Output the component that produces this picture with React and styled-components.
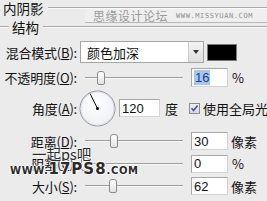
import React from "react";
import styled, { createGlobalStyle } from "styled-components";

const Global = createGlobalStyle`
  html, body { margin: 0; padding: 0; background: #ebebeb; overflow: hidden; }
  body { font-family: "Noto Sans CJK SC", "Noto Sans", sans-serif; }
`;

const Panel = styled.div`
  position: relative;
  width: 267px;
  height: 201px;
  background: #ebebeb;
  color: #111;
  font-size: 13px;
  overflow: hidden;
`;

const GroupHead = styled.div`
  display: flex;
  align-items: center;
  height: ${(p) => p.$h}px;
  padding-left: ${(p) => p.$indent}px;
  &::after {
    content: "";
    flex: 1;
    height: 0;
    border-top: 1px solid #a9a9a9;
    border-bottom: 1px solid #fafafa;
    margin-left: 4px;
  }
`;

const LeadLine = styled.span`
  width: 9px;
  border-top: 1px solid #a9a9a9;
  border-bottom: 1px solid #fafafa;
  margin-right: 3px;
`;

const HeadText = styled.span`
  font-size: 13.5px;
  line-height: 16px;
`;

const Rows = styled.div`
  display: flex;
  flex-direction: column;
  padding-top: ${(p) => p.$top}px;
`;

const Row = styled.div`
  display: flex;
  align-items: center;
  height: ${(p) => p.$h}px;
  margin-bottom: ${(p) => p.$mb || 0}px;
  white-space: nowrap;
  & > * { flex-shrink: 0; }
`;

const Label = styled.div`
  width: 77px;
  text-align: right;
  white-space: nowrap;
  font-size: 13px;
  letter-spacing: -0.2px;
  u { text-decoration: underline; text-underline-offset: 1px; }
`;

const Select = styled.div`
  margin-left: 3px;
  width: 124px;
  height: 22px;
  box-sizing: border-box;
  background: #fff;
  border: 1px solid #a5a5a5;
  display: flex;
  align-items: center;
  padding-left: 6px;
  font-size: 13px;
`;

const SelectText = styled.span`
  flex: 1;
`;

const Arrow = styled.div`
  width: 14px;
  height: 20px;
  background: linear-gradient(#f4f4f4, #dedede);
  border-left: 1px solid #cfcfcf;
  display: flex;
  align-items: center;
  justify-content: center;
  &::after {
    content: "";
    border-left: 3px solid transparent;
    border-right: 3px solid transparent;
    border-top: 4px solid #333;
  }
`;

const Swatch = styled.div`
  margin-left: 3px;
  width: 30px;
  height: 17px;
  background: #000;
  border: 1px solid #7a7a7a;
  box-sizing: border-box;
`;

const Slider = styled.div`
  position: relative;
  margin-left: 8px;
  width: 98px;
  height: 14px;
  &::before {
    content: "";
    position: absolute;
    left: 0;
    right: 0;
    top: 6px;
    border-top: 1px solid #9d9d9d;
    border-bottom: 1px solid #f8f8f8;
  }
`;

const Thumb = styled.div`
  position: absolute;
  top: 0;
  width: 6px;
  height: 12px;
  border: 1px solid #8a8a8a;
  border-radius: 3px 3px 2px 2px;
  background: linear-gradient(#ffffff, #e2e2e2);
`;

const Input = styled.div`
  margin-left: ${(p) => p.$ml || 8}px;
  width: ${(p) => p.$w || 37}px;
  height: ${(p) => p.$ih || 18}px;
  box-sizing: border-box;
  background: #fff;
  border: 1px solid #a8a8a8;
  border-right-color: #d4d4d4;
  border-bottom-color: #d4d4d4;
  display: flex;
  align-items: center;
  padding-left: 2px;
  font-family: "Liberation Sans", Arial, sans-serif;
  font-size: 13px;
`;

const Selected = styled.span`
  background: #a9c7ec;
  color: #1b3d8f;
  padding: 0 1px;
`;

const Unit = styled.span`
  margin-left: ${(p) => p.$ml || 4}px;
  font-size: 13px;
  white-space: nowrap;
`;

const Check = styled.div`
  margin-left: 11px;
  width: 11px;
  height: 11px;
  box-sizing: border-box;
  border: 1px solid #8c8c8c;
  background: linear-gradient(#f0f0f0, #d8d8e4);
  display: flex;
  align-items: center;
  justify-content: center;
`;

const TopMark = styled.div`
  position: absolute;
  left: 85px;
  top: 9px;
  width: 182px;
  height: 14px;
  background: #efefef;
  border-bottom: 1px solid #b9b9b9;
  display: flex;
  align-items: center;
  padding-left: 8px;
  box-sizing: border-box;
`;

const MarkCn = styled.span`
  color: #9a9a9a;
  font-size: 12px;
  letter-spacing: 0.5px;
`;

const MarkEn = styled.span`
  margin-left: 8px;
  color: #8e8e8e;
  font-family: "DejaVu Sans Mono", monospace;
  font-size: 7px;
  letter-spacing: 0.6px;
`;

const BottomMark = styled.div`
  position: absolute;
  left: 10px;
  top: 146px;
  display: flex;
  flex-direction: column;
  align-items: flex-start;
  pointer-events: none;
`;

const MarkPs = styled.span`
  margin-left: 22px;
  font-size: 14.5px;
  line-height: 16px;
  color: #2a2a2a;
  text-shadow: 0 0 2px #fff, 0 0 2px #fff;
`;

const MarkSite = styled.span`
  font-family: "DejaVu Sans", sans-serif;
  font-weight: bold;
  font-size: 10px;
  line-height: 14px;
  color: #2b2b2b;
  letter-spacing: 0.6px;
  text-shadow: 1px 0 #fff, -1px 0 #fff, 0 1px #fff, 0 -1px #fff;
  b { font-size: 15px; letter-spacing: 1px; }
`;

const Dial = () => (
  <svg width="37" height="37" viewBox="0 0 37 37" style={{ marginLeft: 2 }}>
    <defs>
      <radialGradient id="dg" cx="0.45" cy="0.4" r="0.6">
        <stop offset="0" stopColor="#ffffff" />
        <stop offset="1" stopColor="#eef0f4" />
      </radialGradient>
    </defs>
    <circle cx="18.5" cy="18.5" r="17.5" fill="url(#dg)" stroke="#8f939a" strokeWidth="1" />
    <circle cx="18.5" cy="18.5" r="16.5" fill="none" stroke="#d8dbe0" strokeWidth="0.8" />
    <line x1="18.5" y1="18.5" x2="11" y2="3.5" stroke="#000" strokeWidth="1" />
    <circle cx="18.5" cy="18.5" r="1.5" fill="#000" />
  </svg>
);

const CheckMark = () => (
  <svg width="9" height="9" viewBox="0 0 9 9">
    <path d="M1.5 4.2 L3.6 6.6 L7.6 1.6" fill="none" stroke="#45539c" strokeWidth="1.6" />
  </svg>
);

export default function App() {
  return (
    <Panel>
      <Global />
      <GroupHead $h={16} $indent={3}>
        <HeadText>内阴影</HeadText>
      </GroupHead>
      <GroupHead $h={22} $indent={0}>
        <LeadLine />
        <HeadText>结构</HeadText>
      </GroupHead>
      <Rows $top={3}>
        <Row $h={22} $mb={4}>
          <Label>混合模式(<u>B</u>):</Label>
          <Select>
            <SelectText>颜色加深</SelectText>
            <Arrow />
          </Select>
          <Swatch />
        </Row>
        <Row $h={21} $mb={1}>
          <Label>不透明度(<u>O</u>):</Label>
          <Slider>
            <Thumb style={{ left: 12 }} />
          </Slider>
          <Input $ih={19}>
            <Selected>16</Selected>
          </Input>
          <Unit>%</Unit>
        </Row>
        <Row $h={38} $mb={3}>
          <Label>角度(<u>A</u>):</Label>
          <Dial />
          <Input $ml={3} $w={41}>120</Input>
          <Unit $ml={5}>度</Unit>
          <Check>
            <CheckMark />
          </Check>
          <Unit $ml={3}>使用全局光(G)</Unit>
        </Row>
        <Row $h={22} $mb={0}>
          <Label>距离(<u>D</u>):</Label>
          <Slider>
            <Thumb style={{ left: 25 }} />
          </Slider>
          <Input>30</Input>
          <Unit $ml={3}>像素</Unit>
        </Row>
        <Row $h={23} $mb={0}>
          <Label>阻塞(<u>C</u>):</Label>
          <Slider>
            <Thumb style={{ left: -4 }} />
          </Slider>
          <Input>0</Input>
          <Unit>%</Unit>
        </Row>
        <Row $h={22}>
          <Label>大小(<u>S</u>):</Label>
          <Slider>
            <Thumb style={{ left: 24 }} />
          </Slider>
          <Input>62</Input>
          <Unit $ml={3}>像素</Unit>
        </Row>
      </Rows>
      <TopMark>
        <MarkCn>思缘设计论坛</MarkCn>
        <MarkEn>WWW.MISSYUAN.COM</MarkEn>
      </TopMark>
      <BottomMark>
        <MarkPs>一起ps吧</MarkPs>
        <MarkSite>WWW.<b>17PS8</b>.COM</MarkSite>
      </BottomMark>
    </Panel>
  );
}
